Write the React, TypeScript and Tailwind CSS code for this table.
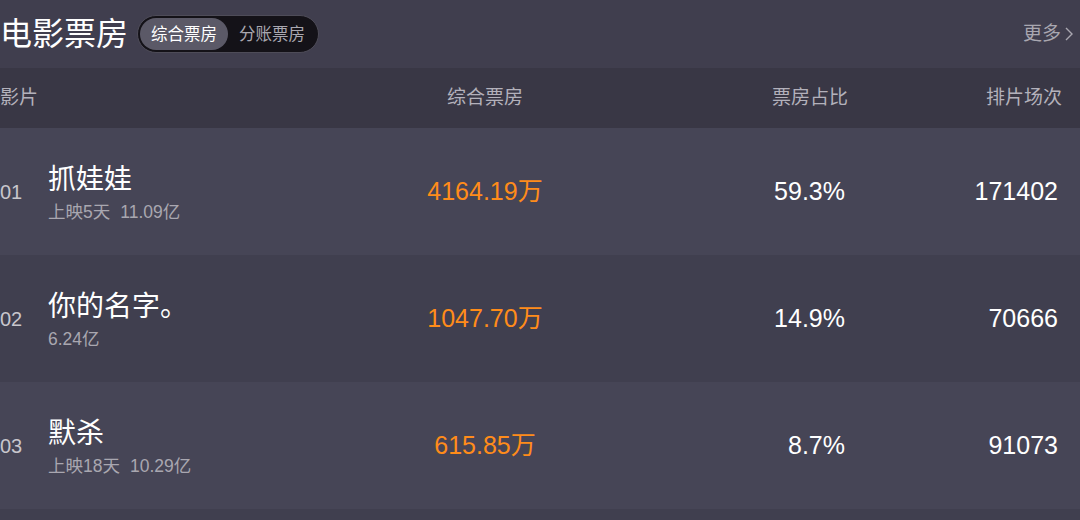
import React from 'react';

interface Movie {
  rank: string;
  name: string;
  sub?: string;
  total: string;
  boxOffice: string;
  share: string;
  shows: string;
}

const movies: Movie[] = [
  { rank: '01', name: '抓娃娃', sub: '上映5天', total: '11.09亿', boxOffice: '4164.19万', share: '59.3%', shows: '171402' },
  { rank: '02', name: '你的名字。', total: '6.24亿', boxOffice: '1047.70万', share: '14.9%', shows: '70666' },
  { rank: '03', name: '默杀', sub: '上映18天', total: '10.29亿', boxOffice: '615.85万', share: '8.7%', shows: '91073' },
  { rank: '04', name: '', total: '', boxOffice: '', share: '', shows: '' },
];

const font = { fontFamily: '"Liberation Sans", "Noto Sans CJK SC", sans-serif' };

export default function App() {
  return (
    <div className="w-[1080px] h-[520px] overflow-hidden bg-[#403e4e]" style={font}>
      {/* title bar */}
      <div className="h-[68px] flex items-center justify-between pr-[6px]">
        <div className="flex items-center">
          <h1 className="text-[32px] leading-none text-white">电影票房</h1>
          <div className="ml-[9px] flex items-center h-[38px] rounded-full bg-[#141218] border border-[#4e4c58] px-[2px]">
            <span className="h-[32px] flex items-center px-[11px] rounded-full bg-[#5b5967] text-white text-[16.5px]">综合票房</span>
            <span className="h-[32px] flex items-center px-[11px] text-[#a9a7b0] text-[16.5px]">分账票房</span>
          </div>
        </div>
        <div className="flex items-center text-[#a9a7b0] text-[19px]">
          <span>更多</span>
          <svg width="10" height="16" viewBox="0 0 10 16" className="ml-[3px]">
            <path d="M2 2l6 6-6 6" fill="none" stroke="#a9a7b0" strokeWidth="1.4" />
          </svg>
        </div>
      </div>

      {/* column headers */}
      <div className="h-[60px] flex items-center bg-[#393745] text-[#b3b1bb] text-[19px]">
        <div className="w-[378px]">影片</div>
        <div className="w-[214px] text-center">综合票房</div>
        <div className="w-[256px] text-right">票房占比</div>
        <div className="flex-1 text-right pr-[18px]">排片场次</div>
      </div>

      {movies.map((m, i) => (
        <div
          key={m.rank}
          className={`h-[127px] flex items-center ${i % 2 === 0 ? 'bg-[#464556]' : 'bg-[#403f4f]'}`}
        >
          {m.name && (
            <>
              <div className="w-[48px] text-[20px] text-[#c8c6cc]">{m.rank}</div>
              <div className="w-[330px] flex flex-col mt-[2px]">
                <span className="text-[28px] leading-[34px] text-white">{m.name}</span>
                <span className="text-[17.5px] leading-[22px] text-[#a9a7b0] mt-[4px]">
                  {m.sub && <span className="mr-[10px]">{m.sub}</span>}
                  {m.total}
                </span>
              </div>
              <div className="w-[214px] text-center text-[25px] text-[#ff8c1a]">{m.boxOffice}</div>
              <div className="w-[253px] text-right text-[25px] text-white">{m.share}</div>
              <div className="flex-1 text-right pr-[22px] text-[25px] text-white">{m.shows}</div>
            </>
          )}
        </div>
      ))}
    </div>
  );
}
